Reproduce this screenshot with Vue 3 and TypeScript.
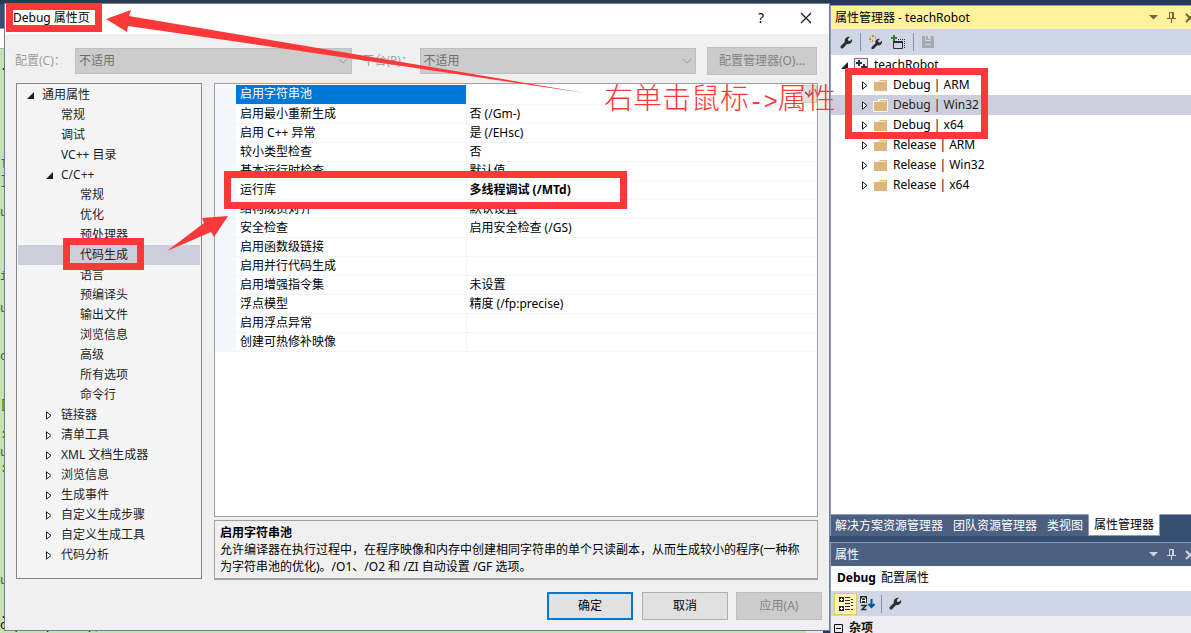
<script setup lang="ts">
import { ref } from 'vue'

interface TreeNode {
  label: string
  level: number
  state?: 'open' | 'closed'
}

interface PropertyRow {
  name: string
  value: string
  bold?: boolean
}

const tree: TreeNode[] = [
  { label: '通用属性', level: 0, state: 'open' },
  { label: '常规', level: 1 },
  { label: '调试', level: 1 },
  { label: 'VC++ 目录', level: 1 },
  { label: 'C/C++', level: 1, state: 'open' },
  { label: '常规', level: 2 },
  { label: '优化', level: 2 },
  { label: '预处理器', level: 2 },
  { label: '代码生成', level: 2 },
  { label: '语言', level: 2 },
  { label: '预编译头', level: 2 },
  { label: '输出文件', level: 2 },
  { label: '浏览信息', level: 2 },
  { label: '高级', level: 2 },
  { label: '所有选项', level: 2 },
  { label: '命令行', level: 2 },
  { label: '链接器', level: 1, state: 'closed' },
  { label: '清单工具', level: 1, state: 'closed' },
  { label: 'XML 文档生成器', level: 1, state: 'closed' },
  { label: '浏览信息', level: 1, state: 'closed' },
  { label: '生成事件', level: 1, state: 'closed' },
  { label: '自定义生成步骤', level: 1, state: 'closed' },
  { label: '自定义生成工具', level: 1, state: 'closed' },
  { label: '代码分析', level: 1, state: 'closed' },
]

const rows: PropertyRow[] = [
  { name: '启用字符串池', value: '' },
  { name: '启用最小重新生成', value: '否 (/Gm-)' },
  { name: '启用 C++ 异常', value: '是 (/EHsc)' },
  { name: '较小类型检查', value: '否' },
  { name: '基本运行时检查', value: '默认值' },
  { name: '运行库', value: '多线程调试 (/MTd)', bold: true },
  { name: '结构成员对齐', value: '默认设置' },
  { name: '安全检查', value: '启用安全检查 (/GS)' },
  { name: '启用函数级链接', value: '' },
  { name: '启用并行代码生成', value: '' },
  { name: '启用增强指令集', value: '未设置' },
  { name: '浮点模型', value: '精度 (/fp:precise)' },
  { name: '启用浮点异常', value: '' },
  { name: '创建可热修补映像', value: '' },
]

const sheets = ['Debug | ARM', 'Debug | Win32', 'Debug | x64', 'Release | ARM', 'Release | Win32', 'Release | x64']
const tabs = ['解决方案资源管理器', '团队资源管理器', '类视图', '属性管理器']

const selectedNode = ref(8)
const selectedRow = ref(0)
const selectedSheet = ref(1)
const activeTab = ref(3)

const wrench =
  'M.8 10.8 5.2 6.400C4.400 3 7.200.2 10.800.9L8.400 3.300 8.800 5.100 10.700 5.500 13 3.200C13.800 6.900 10.700 9.500 7.500 8.700L3.200 13.100C1.700 14.200-.3 12.400.8 10.800Z'
</script>

<template>
  <div class="desktop">
    <div class="editor" aria-hidden="true">
      <div class="editor-tabs"></div>
      <div class="editor-nav"></div>
      <div class="code">
        <span class="mark c1">.</span><span class="mark c2">l</span><span class="mark c3">]</span>
        <span class="mark c4">u</span><span class="mark c5">i</span><span class="mark c6">u</span>
        <span class="mark c7">c</span><span class="mark c8">[</span><span class="mark c9">:</span>
        <span class="mark c10">u</span><span class="mark c11">:</span><span class="mark c12">u</span>
        <span class="mark c13">.</span>
      </div>
      <div class="code-line">capied(<b>raibo</b>);</div>
      <div class="scroll-corner"></div>
    </div>

    <section class="dialog" role="dialog" aria-labelledby="dialog-title">
      <header class="dialog-title">
        <h1 id="dialog-title">Debug 属性页</h1>
        <button class="caption" type="button" aria-label="Help">?</button>
        <button class="caption" type="button" aria-label="Close">
          <svg width="12" height="12" viewBox="0 0 12 12"><path d="M1 1 11 11M11 1 1 11" stroke="#111" stroke-width="1.2" /></svg>
        </button>
      </header>

      <div class="config">
        <label class="config-label" for="cfg">配置(C)：</label>
        <div class="combo">
          <select id="cfg" disabled><option>不适用</option></select>
          <svg class="chev" width="10" height="6" viewBox="0 0 10 6"><path d="M1 1 5 5 9 1" fill="none" stroke="#999" /></svg>
        </div>
        <label class="config-label second" for="plat">平台(P)：</label>
        <div class="combo">
          <select id="plat" disabled><option>不适用</option></select>
          <svg class="chev" width="10" height="6" viewBox="0 0 10 6"><path d="M1 1 5 5 9 1" fill="none" stroke="#999" /></svg>
        </div>
        <button class="push manager" type="button" disabled>配置管理器(O)...</button>
      </div>

      <div class="main">
        <ul class="tree" role="tree">
          <li
            v-for="(n, i) in tree"
            :key="i"
            role="treeitem"
            :aria-selected="i === selectedNode"
            :class="['node', 'level' + n.level, { selected: i === selectedNode }]"
            @click="selectedNode = i"
          >
            <span class="twist">
              <svg v-if="n.state === 'open'" width="7" height="7" viewBox="0 0 7 7"><path d="M7 0V7H0Z" fill="#1e1e1e" /></svg>
              <svg v-else-if="n.state === 'closed'" width="6" height="9" viewBox="0 0 6 9"><path d="M.5.8V8.200L5 4.500Z" fill="#fff" stroke="#1e1e1e" /></svg>
            </span>
            {{ n.label }}
          </li>
        </ul>

        <div class="right">
          <div class="grid">
            <table>
              <tbody>
                <tr v-for="(r, i) in rows" :key="r.name" @click="selectedRow = i">
                  <td class="gutter"></td>
                  <th scope="row" :class="{ selected: i === selectedRow }">{{ r.name }}</th>
                  <td :class="['value', { bold: r.bold }]">
                    <div class="value-box">
                      {{ r.value }}
                      <button v-if="i === selectedRow" class="drop" type="button" aria-label="Open list">
                        <svg width="10" height="6" viewBox="0 0 10 6"><path d="M1 1 5 5 9 1" fill="none" stroke="#444" stroke-width="1.2" /></svg>
                      </button>
                    </div>
                  </td>
                </tr>
              </tbody>
            </table>
          </div>
          <div class="desc">
            <strong>启用字符串池</strong>
            <p>允许编译器在执行过程中，在程序映像和内存中创建相同字符串的单个只读副本，从而生成较小的程序(一种称为字符串池的优化)。/O1、/O2 和 /ZI 自动设置 /GF 选项。</p>
          </div>
        </div>
      </div>

      <footer class="actions">
        <button class="push default" type="button">确定</button>
        <button class="push" type="button">取消</button>
        <button class="push" type="button" disabled>应用(A)</button>
      </footer>
    </section>

    <aside class="dock">
      <section class="panel manager-panel">
        <header class="panel-title active">
          <h2>属性管理器 - teachRobot</h2>
          <button type="button" aria-label="Window position"><svg width="9" height="5" viewBox="0 0 9 5"><path d="M0 0H9L4.5 4.5Z" fill="currentColor" /></svg></button>
          <button type="button" aria-label="Pin"><svg width="9" height="11" viewBox="0 0 9 11"><path d="M2.5 6V.5H6.500V6M0 6.500H9M4.500 7V11M5.500 1V6" fill="none" stroke="currentColor" /></svg></button>
          <button class="close" type="button" aria-label="Close"><svg width="10" height="10" viewBox="0 0 10 10"><path d="M1 1 9 9M9 1 1 9" stroke="currentColor" stroke-width="2" /></svg></button>
        </header>
        <div class="toolbar">
          <button type="button" aria-label="Properties"><svg width="13" height="13" viewBox="0 0 14 14"><path :d="wrench" fill="#2d2d30" /></svg></button>
          <i class="sep"></i>
          <button type="button" aria-label="Add new sheet">
            <svg width="14" height="14" viewBox="0 0 14 14">
              <path :d="wrench" fill="#2d2d30" transform="translate(2 3) scale(.84)" />
              <path d="M3 0H5V2H3ZM0 3H2V5H0ZM1 1H2V2H1ZM6 1H7V2H6ZM1 6H2V7H1ZM3 5H4V7H3ZM6 3H7V4H6Z" fill="#d78a28" />
            </svg>
          </button>
          <button type="button" aria-label="Add existing sheet">
            <svg width="15" height="15" viewBox="0 0 15 15">
              <path d="M2 0H4V2H6V4H4V6H2V4H0V2H2Z" fill="#2f7d32" />
              <path d="M2.500 7.500H11.500V13.500H2.500Z" fill="none" stroke="#2d2d30" />
              <path d="M2 6H12V8H2Z" fill="#2d2d30" />
              <path d="M7 4.500H14M13.500 4V14" stroke="#2d2d30" stroke-dasharray="1 1" />
            </svg>
          </button>
          <i class="sep"></i>
          <button type="button" aria-label="Save" disabled><svg width="12" height="12" viewBox="0 0 12 12"><path d="M0 0H3V5H9V0H11L12 1V12H0ZM4 0H6V3H8V0H8.500V4H4ZM3 8V9H9V8Z" fill="#a8aab2" fill-rule="evenodd" /></svg></button>
        </div>
        <ul class="sheets" role="tree">
          <li class="project" role="treeitem">
            <svg width="7" height="7" viewBox="0 0 7 7"><path d="M7 0V7H0Z" fill="#1e1e1e" /></svg>
            <svg width="14" height="14" viewBox="0 0 14 14">
              <path d="M.5.5H13.500V13.500H.5Z" fill="#f4f0f6" stroke="#9b4f96" />
              <path d="M4 2H6V4H8V6H6V8H4V6H2V4H4ZM9 6H11V8H13V10H11V12H9V10H7V8H9Z" fill="#333" />
            </svg>
            <span>teachRobot</span>
          </li>
          <li
            v-for="(s, i) in sheets"
            :key="s"
            role="treeitem"
            :aria-selected="i === selectedSheet"
            :class="['sheet', { selected: i === selectedSheet }]"
            @click="selectedSheet = i"
          >
            <svg width="6" height="9" viewBox="0 0 6 9"><path d="M.5.8V8.200L5 4.500Z" fill="#fff" stroke="#1e1e1e" /></svg>
            <svg class="folder" width="15" height="13" viewBox="0 0 15 13">
              <path v-if="i === selectedSheet" d="M0 2H5V0H15V13H0Z" fill="#fff" />
              <path d="M1 3H6L7 1H14V12H1Z" fill="#dcb67a" />
              <path d="M7 2.500H13" stroke="#f3e3c6" />
            </svg>
            <span>{{ s }}</span>
          </li>
        </ul>
      </section>

      <nav class="tabs" role="tablist">
        <button
          v-for="(t, i) in tabs"
          :key="t"
          type="button"
          role="tab"
          :aria-selected="i === activeTab"
          :class="['tab', { current: i === activeTab }]"
          @click="activeTab = i"
        >{{ t }}</button>
        <span class="tab-space"></span>
      </nav>

      <section class="panel props">
        <header class="panel-title">
          <h2>属性</h2>
          <button type="button" aria-label="Window position"><svg width="9" height="5" viewBox="0 0 9 5"><path d="M0 0H9L4.500 4.500Z" fill="currentColor" /></svg></button>
          <button type="button" aria-label="Pin"><svg width="9" height="11" viewBox="0 0 9 11"><path d="M2.500 6V.5H6.500V6M0 6.500H9M4.500 7V11M5.500 1V6" fill="none" stroke="currentColor" /></svg></button>
          <button class="close" type="button" aria-label="Close"><svg width="10" height="10" viewBox="0 0 10 10"><path d="M1 1 9 9M9 1 1 9" stroke="currentColor" stroke-width="2" /></svg></button>
        </header>
        <div class="object"><b>Debug</b> 配置属性</div>
        <div class="toolbar prop-tools">
          <button class="pressed" type="button" aria-label="Categorized">
            <svg width="14" height="14" viewBox="0 0 14 14">
              <path d="M0 0H5V5H0ZM0 9H5V14H0Z" fill="#2d2d30" />
              <path d="M1 2.500H4M2.500 1V4M1 11.500H4M2.500 10V13" stroke="#fff" />
              <path d="M6 .5H11M6 3.500H11M6 6.500H11M6 9.500H11M6 12.500H11M12 2.500H14M12 5.500H14M12 8.500H14M12 12.500H14" stroke="#2d2d30" />
            </svg>
          </button>
          <button type="button" aria-label="Alphabetical">
            <svg width="15" height="15" viewBox="0 0 15 15">
              <path d="M0 0H7V7H0Z" fill="#2d2d30" />
              <path d="M1.500 6.500V3L3.500 1 5.500 3V6.500M2 4.500H5" fill="none" stroke="#fff" />
              <path d="M1 9.500H6L2 13.500H6.500" fill="none" stroke="#2d2d30" stroke-width="1.500" />
              <path d="M11.500 3V11M8.500 8 11.500 11 14.500 8" fill="none" stroke="#00539c" stroke-width="2" />
            </svg>
          </button>
          <i class="sep"></i>
          <button type="button" aria-label="Property pages"><svg width="13" height="13" viewBox="0 0 14 14"><path :d="wrench" fill="#2d2d30" /></svg></button>
        </div>
        <div class="category">
          <svg width="9" height="9" viewBox="0 0 9 9"><path d="M.5.5H8.500V8.500H.5ZM2 4.500H7" fill="none" stroke="#111" /></svg>
          <b>杂项</b>
        </div>
      </section>
    </aside>

    <div class="notes">
      <div class="box box-title"></div>
      <div class="box box-node"></div>
      <div class="box box-runtime"></div>
      <div class="box box-sheets"></div>
      <svg class="arrows" width="600" height="260" viewBox="0 0 600 260">
        <path d="M106 19 131 10 129 16 300 45 585 93 300 51 128 26 127 32Z" fill="#fd3838" />
        <path d="M228 216 202 218 204 223 167 251 211 232 214 237Z" fill="#fd3838" />
      </svg>
      <div class="note">右单击鼠标<span>-&gt;</span>属性</div>
    </div>
  </div>
</template>

<style>
html,
body {
  margin: 0;
  overflow: hidden;
}
</style>

<style scoped>
.desktop {
  position: relative;
  display: flex;
  height: 100vh;
  overflow: hidden;
  background: #293955;
  color: #111;
  font: 12px/16px "Noto Sans", "Noto Sans CJK SC", sans-serif;
}
.desktop * {
  box-sizing: border-box;
}
button,
select {
  font: inherit;
  color: inherit;
}
button {
  padding: 0;
  border: 0;
  background: none;
}
svg {
  display: block;
  flex: none;
}
ul {
  margin: 0;
  padding: 0;
  list-style: none;
}
h1,
h2,
p {
  margin: 0;
  font-size: 12px;
  font-weight: 400;
}

/* editor behind the dialog */
.editor {
  position: absolute;
  top: 4px;
  bottom: 0;
  left: 0;
  right: 368px;
  display: flex;
  flex-direction: column;
  background: #c6e2b3;
  overflow: hidden;
}
.editor-tabs {
  flex: 0 0 25px;
  background: #364e6f;
  border-bottom: 1px solid #8e9bbc;
}
.editor-nav {
  flex: 0 0 20px;
  background: #fff;
  border-bottom: 1px solid #a5adbd;
}
.code {
  position: relative;
  flex: 1;
  color: #008000;
  font: 12px/16px "Liberation Mono", monospace;
}
.mark {
  position: absolute;
  left: 0;
}
.c1 { top: 10px; color: #000; }
.c2 { top: 108px; }
.c3 { top: 124px; }
.c4 { top: 156px; }
.c5 { top: 220px; }
.c6 { top: 252px; }
.c7 { top: 300px; }
.c8 { top: 348px; }
.c9 { top: 378px; }
.c10 { top: 396px; }
.c11 { top: 412px; }
.c12 { top: 524px; }
.c13 { top: 558px; color: #000; }
.code-line {
  flex: 0 0 14px;
  color: #000;
  font: 12px/14px "Liberation Mono", monospace;
}
.code-line b {
  color: #00f;
  font-weight: 400;
}
.scroll-corner {
  position: absolute;
  right: 0;
  bottom: 0;
  width: 17px;
  height: 12px;
  background: #e8e8ec;
}

/* dialog */
.dialog {
  position: relative;
  display: flex;
  flex: 1;
  flex-direction: column;
  min-width: 0;
  margin: 3px 0 2px 4px;
  background: #f0f0f0;
  border: 1px solid #6f7f99;
}
.dialog-title {
  display: flex;
  flex: 0 0 30px;
  align-items: center;
  padding: 0 13px 2px 8px;
  background: #fff;
  color: #000;
}
.dialog-title h1 {
  flex: 1;
}
.caption {
  display: flex;
  align-items: center;
  justify-content: center;
  width: 20px;
  height: 28px;
  margin-left: 25px;
  font-size: 14px;
}
.config {
  display: flex;
  align-items: center;
  padding: 13px 12px 8px 10px;
}
.config-label {
  flex: 0 0 60px;
  color: #9d9d9d;
  white-space: nowrap;
}
.config-label.second {
  flex-basis: 68px;
  padding-left: 11px;
}
.combo {
  position: relative;
  flex: 1;
}
.combo select {
  display: block;
  width: 100%;
  height: 26px;
  padding: 0 3px;
  appearance: none;
  background: #ccc;
  border: 1px solid #bfbfbf;
  border-radius: 0;
  color: #6d6d6d;
  opacity: 1;
}
.chev {
  position: absolute;
  top: 10px;
  right: 4px;
}
.push {
  width: 86px;
  height: 28px;
  background: #e1e1e1;
  border: 1px solid #adadad;
  color: #000;
}
.push:disabled {
  background: #ccc;
  border-color: #bfbfbf;
  color: #838383;
}
.push.default {
  margin-right: 1px;
  border: 2px solid #0078d7;
}
.push.manager {
  width: 110px;
  margin-left: 11px;
}
.main {
  display: flex;
  flex: 1;
  gap: 12px;
  min-height: 0;
  padding: 0 11px;
}
.tree {
  flex: 0 0 186px;
  margin-bottom: 1px;
  padding: 1px;
  overflow: hidden;
  background: #f5f5f5;
  border: 1px solid #828790;
  color: #1e1e1e;
}
.node {
  display: flex;
  align-items: center;
  height: 20px;
  white-space: nowrap;
}
.node.selected {
  background: #cccedb;
}
.twist {
  flex: 0 0 15px;
}
.level0 { padding-left: 9px; }
.level1 { padding-left: 28px; }
.level2 { padding-left: 47px; }

.right {
  display: flex;
  flex: 1;
  flex-direction: column;
  gap: 3px;
  min-width: 0;
}
.grid {
  flex: 1;
  min-height: 0;
  padding-top: 1px;
  overflow: hidden;
  background: #fff;
  border: 1px solid #a0a0a0;
}
table {
  width: 100%;
  table-layout: fixed;
  border-collapse: collapse;
  color: #000;
}
tr {
  height: 19px;
}
td,
th {
  height: 19px;
  padding: 0 0 0 4px;
  border-bottom: 1px solid #f2f5fa;
  font-weight: 400;
  line-height: 18px;
  text-align: left;
  white-space: nowrap;
}
.gutter {
  width: 21px;
  padding: 0;
  background: #f4f7fc;
}
th {
  width: 230px;
  border-right: 1px solid #f2f5fa;
}
.value {
  padding-left: 3px;
}
th.selected {
  background: #0078d7;
  color: #fff;
}
.value-box {
  display: flex;
  justify-content: space-between;
  height: 18px;
}
.value.bold {
  font-weight: 700;
}
.drop {
  display: flex;
  align-items: center;
  justify-content: center;
  width: 16px;
  height: 18px;
  margin-left: auto;
  background: #e1e1e1;
  border: 1px solid #c8c8c8;
}
.desc {
  flex: 0 0 60px;
  padding: 3px 16px 0 5px;
  overflow: hidden;
  border: 1px solid #a0a0a0;
  border-bottom-width: 2px;
  color: #000;
  line-height: 17px;
}
.desc strong {
  display: block;
}
.actions {
  display: flex;
  justify-content: flex-end;
  gap: 8px;
  padding: 12px 7px 10px;
}

/* docked tool windows */
.dock {
  position: relative;
  display: flex;
  flex: 0 0 361px;
  flex-direction: column;
  min-width: 0;
  padding-top: 5px;
}
.panel {
  display: flex;
  flex-direction: column;
  overflow: hidden;
  border-top: 1px solid #8e9bbc;
  border-left: 1px solid #8e9bbc;
}
.manager-panel {
  flex: 1;
  background: #fff;
}
.panel-title {
  display: flex;
  flex: 0 0 23px;
  align-items: center;
  gap: 9px;
  padding-left: 4px;
  overflow: hidden;
  background: #4d6082;
  color: #fff;
}
.panel-title h2 {
  flex: 1;
}
.panel-title button {
  flex: none;
  color: #ced4dd;
}
.panel-title .close {
  width: 6px;
}
.panel-title.active {
  background: #fff29d;
  color: #000;
}
.panel-title.active button {
  color: #75633d;
}
.toolbar {
  display: flex;
  flex: 0 0 26px;
  align-items: center;
  gap: 8px;
  padding-left: 9px;
  background: #cfd6e5;
}
.manager-panel .toolbar {
  gap: 8px;
}
.sep {
  width: 1px;
  height: 18px;
  margin-left: -1px;
  background: #8591a5;
}
.sheets {
  color: #000;
}
.project,
.sheet {
  display: flex;
  align-items: center;
  height: 20px;
  white-space: nowrap;
}
.project {
  gap: 6px;
  padding-left: 10px;
}
.sheet {
  gap: 6px;
  padding-left: 31px;
}
.sheet .folder {
  margin: 0 -1px;
}
.sheet.selected {
  background: #cccedb;
  color: #1e1e1e;
}
.tabs {
  display: flex;
  flex: 0 0 28px;
  padding-bottom: 6px;
  background: #364e6f;
}
.tab {
  padding: 0 5px;
  background: #4d6082;
  border-top: 1px solid #8e9bbc;
  color: #fff;
  white-space: nowrap;
}
.tab:first-child {
  border-left: 1px solid #8e9bbc;
  padding-left: 4px;
}
.tab.current {
  background: #fff;
  border: 1px solid #8e9bbc;
  border-top-color: #fff;
  color: #000;
}
.tab-space {
  flex: 1;
  border-top: 1px solid #8e9bbc;
}
.props {
  flex: 0 0 91px;
  background: #eeeef2;
}
.object {
  flex: 0 0 25px;
  padding-left: 6px;
  background: #fff;
  color: #000;
  line-height: 23px;
}
.object b {
  margin-right: 2px;
}
.prop-tools {
  flex-basis: 25px;
  gap: 7px;
  padding-left: 3px;
}
.pressed {
  display: flex;
  align-items: center;
  justify-content: center;
  width: 23px;
  height: 22px;
  margin-right: -4px;
  background: #fff4be;
  border: 1px solid #e5c365;
}
.category {
  display: flex;
  flex: 0 0 24px;
  align-items: center;
  gap: 6px;
  padding-left: 3px;
}

/* red callouts over the windows */
.notes {
  position: absolute;
  inset: 0;
  pointer-events: none;
}
.box {
  position: absolute;
  border: 7px solid #fd3838;
}
.box-title { left: 6px; top: 3px; width: 96px; height: 29px; }
.box-node { left: 63px; top: 238px; width: 81px; height: 32px; }
.box-runtime { left: 224px; top: 171px; width: 403px; height: 38px; }
.box-sheets { left: 845px; top: 68px; width: 143px; height: 71px; }
.arrows {
  position: absolute;
  top: 0;
  left: 0;
}
.note {
  position: absolute;
  top: 79px;
  left: 604px;
  color: #fd3838;
  font: 300 29px/34px "Noto Sans CJK SC", sans-serif;
  white-space: nowrap;
}
.note span {
  font: 24px/34px "Liberation Mono", monospace;
}
</style>
